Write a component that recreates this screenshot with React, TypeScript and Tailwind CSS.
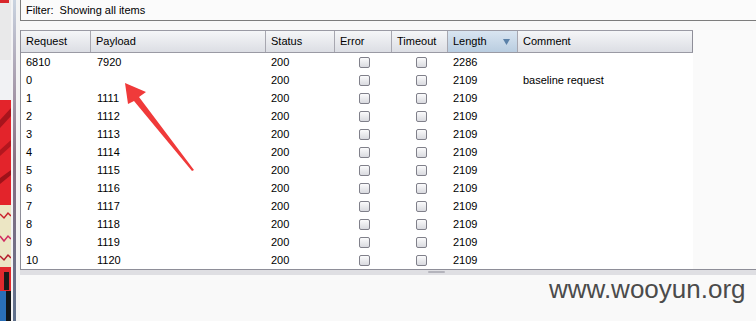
import React from 'react'

const cols = [
  { key: 'request', label: 'Request', w: 'w-[70px]' },
  { key: 'payload', label: 'Payload', w: 'w-[175px]' },
  { key: 'status', label: 'Status', w: 'w-[69px]' },
  { key: 'error', label: 'Error', w: 'w-[57px]' },
  { key: 'timeout', label: 'Timeout', w: 'w-[56px]' },
  { key: 'length', label: 'Length', w: 'w-[70px]' },
  { key: 'comment', label: 'Comment', w: 'w-[175px]' },
]

const rows = [
  { req: '6810', payload: '7920', len: '2286', comment: '' },
  { req: '0', payload: '', len: '2109', comment: 'baseline request' },
  ...Array.from({ length: 10 }, (_, i) => ({
    req: String(i + 1),
    payload: String(1111 + i),
    len: '2109',
    comment: '',
  })),
]

function Check() {
  return (
    <span className="block w-[11px] h-[11px] rounded-[2px] border border-[#80808a] bg-gradient-to-b from-[#fbfbfc] to-[#d9dadf]" />
  )
}

function DesktopStrip() {
  return (
    <svg width="11" height="321" viewBox="0 0 11 321" className="shrink-0">
      <rect x="0" y="0" width="11" height="321" fill="#e9e9ea" />
      <rect x="0" y="0" width="9" height="3" fill="#d8262b" />
      <rect x="0" y="60" width="11" height="40" fill="#f1f2f4" />
      <rect x="0" y="100" width="11" height="105" fill="#e3242b" />
      <path d="M0 120 L11 108 L11 116 L0 128 Z" fill="#a8141c" />
      <path d="M0 150 L11 140 L11 146 L0 156 Z" fill="#b3161e" />
      <path d="M0 178 L11 170 L11 175 L0 184 Z" fill="#9e1219" />
      <rect x="0" y="205" width="11" height="62" fill="#ece6c4" />
      <path d="M0 214 L4 218 L8 213 L11 216" stroke="#c9202b" strokeWidth="1.5" fill="none" />
      <path d="M0 236 L4 241 L8 236 L11 239" stroke="#d02a60" strokeWidth="1.5" fill="none" />
      <path d="M0 256 L4 260 L8 255 L11 258" stroke="#b31a2a" strokeWidth="1.5" fill="none" />
      <rect x="0" y="267" width="11" height="24" fill="#e12a2e" />
      <rect x="4" y="272" width="5" height="18" fill="#1a1a1a" />
      <rect x="0" y="291" width="11" height="30" fill="#2a6fb8" />
      <rect x="6" y="291" width="5" height="30" fill="#101418" />
    </svg>
  )
}

export default function App() {
  return (
    <div className="relative w-[756px] h-[321px] overflow-hidden flex bg-[#f9f9f9] text-[11px] text-black font-['Liberation_Sans',Arial,sans-serif]">
      <DesktopStrip />
      <div className="w-[2px] bg-[#f4f4f5] shrink-0" />
      <div className="w-[3px] shrink-0 bg-gradient-to-b from-[#c9d3e0] via-[#8a6f82] to-[#5d6f8a]" />
      <div className="w-[4px] shrink-0 bg-[#f3f3f3]" />

      <div className="flex-1 flex flex-col">
        {/* filter bar */}
        <div className="h-[21px] shrink-0 border-l border-b border-[#7c7c7c] bg-[#fbfbfb] pl-[5px] pt-[2px] whitespace-pre">
          Filter:  Showing all items
        </div>
        <div className="h-[9px] shrink-0 bg-[#f8f8f8]" />

        {/* results table in scroll pane */}
        <div className="h-[240px] shrink-0 border-l border-b border-[#8e8e98] flex bg-[#fafafa]">
          <div className="w-[672px] shrink-0 flex flex-col bg-white">
            <div className="h-[23px] flex border-t border-b border-[#9a9aa4]">
              {cols.map((c, i) => (
                <div
                  key={c.key}
                  className={`${c.w} shrink-0 flex items-center pl-[5px] ${
                    i < cols.length - 1 ? 'border-r border-[#a7a7b0]' : 'border-r border-[#8e8e98]'
                  } ${
                    c.key === 'length'
                      ? 'bg-gradient-to-b from-[#d9e5f1] to-[#b9cde0] justify-between pr-[7px]'
                      : 'bg-gradient-to-b from-[#f5f6f8] to-[#dcdee4]'
                  }`}
                >
                  <span>{c.label}</span>
                  {c.key === 'length' && (
                    <svg width="7" height="6" viewBox="0 0 7 6">
                      <path d="M0 0 H7 L3.5 6 Z" fill="#5b81a8" />
                    </svg>
                  )}
                </div>
              ))}
            </div>
            {rows.map((r) => (
              <div key={r.req} className="h-[18px] flex items-center">
                <div className="w-[70px] pl-[5px]">{r.req}</div>
                <div className="w-[175px] pl-[6px]">{r.payload}</div>
                <div className="w-[69px] pl-[5px]">200</div>
                <div className="w-[57px] pl-[24px]">
                  <Check />
                </div>
                <div className="w-[56px] pl-[24px]">
                  <Check />
                </div>
                <div className="w-[70px] pl-[5px]">{r.len}</div>
                <div className="w-[175px] pl-[5px]">{r.comment}</div>
              </div>
            ))}
          </div>
        </div>

        {/* splitter */}
        <div className="h-[5px] shrink-0 bg-[#dfdfe3] flex">
          <div className="ml-[408px] mt-[1px] w-[17px] h-[2px] bg-[#b4b4bc] rounded-[1px]" />
        </div>
        <div className="flex-1 bg-[#f9f9f9]" />
      </div>

      {/* watermark */}
      <div className="absolute left-[549px] top-[276px] text-[26px] leading-none text-[#4b4b4b] font-['Liberation_Sans',Arial,sans-serif]">
        www.wooyun.org
      </div>

      {/* annotation arrow */}
      <svg className="absolute left-0 top-0" width="756" height="321" viewBox="0 0 756 321">
        <polygon
          points="125,83 146,92 139,97 194,170 192,171 134,101 128,104"
          fill="#f03a3a"
        />
      </svg>
    </div>
  )
}
